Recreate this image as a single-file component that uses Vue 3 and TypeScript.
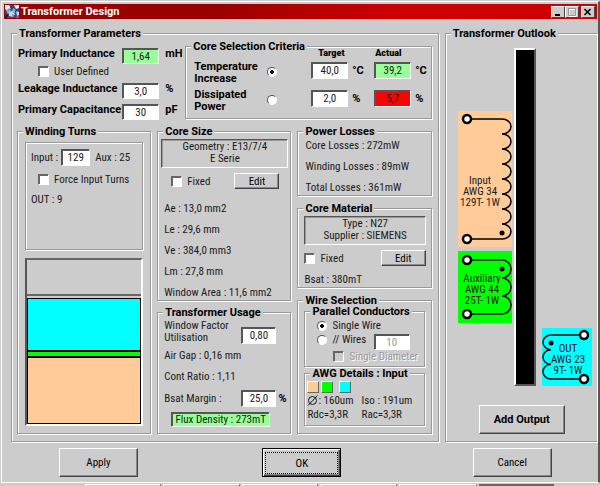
<script setup lang="ts">
import { ref } from 'vue'

interface Winding {
  id: string
  name: string
  gauge: string
  turns: string
  fill: string
  width: number
  height: number
  loops: number
  top: number
  flip: boolean
  dotY: number
  textX: number
  textY: number
}

const primaries: Winding[] = [
  { id: 'in', name: 'Input', gauge: 'AWG 34', turns: '129T- 1W', fill: '#ffcc99', width: 54, height: 136, loops: 8, top: 8, flip: false, dotY: 122, textX: 22, textY: 73 },
  { id: 'aux', name: 'Auxiliary', gauge: 'AWG 44', turns: '25T- 1W', fill: '#00ff00', width: 54, height: 72, loops: 3, top: 9, flip: false, dotY: 18, textX: 24, textY: 31 },
]
const secondaries: Winding[] = [
  { id: 'out', name: 'OUT', gauge: 'AWG 23', turns: '9T- 1W', fill: '#00ffff', width: 50, height: 58, loops: 3, top: 7, flip: true, dotY: 15, textX: 26, textY: 24 },
]

const cuspX = (w: Winding) => (w.flip ? 9 : w.width - 10)
const pinX = (w: Winding) => (w.flip ? w.width - 8 : 9)

function coil(w: Winding): string {
  const pitch = (w.height - 2 * w.top) / w.loops
  const arc = w.flip ? `a8 ${pitch / 2} 0 0 0 0 ${pitch}` : `a9 ${pitch / 2} 0 0 1 0 ${pitch}`
  return `M${pinX(w)} ${w.top}H${cuspX(w)}${arc.repeat(w.loops)}H${pinX(w)}`
}

const layers = [
  { kind: 'out', share: 53 },
  { kind: 'aux', share: 5 },
  { kind: 'in', share: 68 },
]
const coreSize = ['Ae : 13,0 mm2', 'Le : 29,6 mm', 'Ve : 384,0 mm3', 'Lm : 27,8 mm', 'Window Area : 11,6 mm2']
const losses = ['Core Losses : 272mW', 'Winding Losses : 89mW', 'Total Losses : 361mW']
const tasks = [
  { id: 1, span: 76, active: false },
  { id: 2, span: 76, active: false },
  { id: 3, span: 76, active: false },
  { id: 4, span: 77, active: false },
  { id: 5, span: 77, active: false },
  { id: 6, span: 77, active: true },
]

const inductance = ref('1,64')
const leakage = ref('3,0')
const capacitance = ref('30')
const tempTarget = ref('40,0')
const tempActual = ref('39,2')
const powerTarget = ref('2,0')
const powerActual = ref('5,7')
const inputTurns = ref('129')
const windowFactor = ref('0,80')
const bsatMargin = ref('25,0')
const wires = ref('10')
const criterion = ref('temperature')
const conductor = ref('single')
const userDefined = ref(false)
const forceTurns = ref(false)
const sizeFixed = ref(false)
const materialFixed = ref(false)
</script>

<template>
  <div class="screen">
    <main class="window">
      <header class="titlebar">
        <svg class="app-icon" viewBox="0 0 14 13" aria-hidden="true">
          <rect width="14" height="13" fill="#3a4a78" />
          <path d="M0 0h4l2 3-3 3-3-2zM9 0h5v3l-3 1z" fill="#e8eef8" />
          <path d="M1 5l3-2 2 3-3 3zM8 3l3 2-1 3-3-1z" fill="#79b8e0" />
          <path d="M4 7l3-1 3 3-2 3-4-1zM11 6l3 1v3l-2 1z" fill="#c8d4ea" />
          <path d="M5 1l2 1-1 2zM11 4l1 2-2 1zM1 9l2 1-1 3H0z" fill="#14182c" />
          <path d="M7 9l2 1-1 2zM3 4l1 1-1 1zM12 11l2 0v2h-3z" fill="#b04a8a" />
        </svg>
        <h1>Transformer Design</h1>
        <div class="controls">
          <button type="button" class="ctl" aria-label="Minimize"><svg viewBox="0 0 11 10"><path d="M3 8h5" stroke="#000" stroke-width="2" /></svg></button>
          <button type="button" class="ctl" aria-label="Maximize" disabled><svg viewBox="0 0 11 10"><path d="M3 2.5h7v7H3z" fill="none" stroke="#fff" /><path d="M2.500 1v7.500h7V2M2 1.500h8" fill="none" stroke="#999" /></svg></button>
          <button type="button" class="ctl close" aria-label="Close"><svg viewBox="0 0 11 10"><path d="M2.500 2l6 6M8.500 2l-6 6" stroke="#000" stroke-width="1.500" /></svg></button>
        </div>
      </header>

      <div class="body">
        <fieldset class="group params">
          <legend>Transformer Parameters</legend>
          <div class="top">
            <div class="primary">
              <div class="field">
                <label for="ind">Primary Inductance</label>
                <input id="ind" v-model="inductance" class="box good" type="text"><span>mH</span>
              </div>
              <label class="tick user"><input v-model="userDefined" type="checkbox">User Defined</label>
              <div class="field spaced">
                <label for="leak">Leakage Inductance</label>
                <input id="leak" v-model="leakage" class="box" type="text"><span>%</span>
              </div>
              <div class="field">
                <label for="cap">Primary Capacitance</label>
                <input id="cap" v-model="capacitance" class="box" type="text"><span>pF</span>
              </div>
            </div>

            <fieldset class="group criteria">
              <legend>Core Selection Criteria</legend>
              <span class="head target" id="h-target">Target</span>
              <span class="head" id="h-actual">Actual</span>
              <label for="crit-t" class="crit">Temperature<br>Increase</label>
              <input id="crit-t" v-model="criterion" type="radio" name="criterion" value="temperature">
              <div class="value"><input v-model="tempTarget" class="box" type="text" aria-labelledby="h-target"><span>°C</span></div>
              <div class="value"><input v-model="tempActual" class="box good" type="text" aria-labelledby="h-actual"><span>°C</span></div>
              <label for="crit-p" class="crit">Dissipated<br>Power</label>
              <input id="crit-p" v-model="criterion" type="radio" name="criterion" value="power">
              <div class="value"><input v-model="powerTarget" class="box" type="text" aria-labelledby="h-target"><span>%</span></div>
              <div class="value"><input v-model="powerActual" class="box bad" type="text" aria-labelledby="h-actual"><span>%</span></div>
            </fieldset>
          </div>

          <div class="columns">
            <fieldset class="group winding">
              <legend>Winding Turns</legend>
              <div class="turns">
                <div class="turn-row">
                  <label for="turns">Input :</label>
                  <input id="turns" v-model="inputTurns" class="box" type="text">
                  <span>Aux : 25</span>
                </div>
                <label class="tick force"><input v-model="forceTurns" type="checkbox">Force Input Turns</label>
                <p>OUT : 9</p>
              </div>
              <div class="bin">
                <div class="free"></div>
                <div v-for="l in layers" :key="l.kind" class="layer" :class="l.kind" :style="{ flexGrow: l.share }"></div>
              </div>
            </fieldset>

            <div class="stack">
              <fieldset class="group size">
                <legend>Core Size</legend>
                <div class="panel">Geometry : E13/7/4<br>E Serie</div>
                <div class="edit-row">
                  <label class="tick"><input v-model="sizeFixed" type="checkbox">Fixed</label>
                  <button type="button" class="btn small">Edit</button>
                </div>
                <div class="lines">
                  <p v-for="s in coreSize" :key="s">{{ s }}</p>
                </div>
              </fieldset>
              <fieldset class="group usage">
                <legend>Transformer Usage</legend>
                <div class="use-row">
                  <label for="wf">Window Factor<br>Utilisation</label>
                  <input id="wf" v-model="windowFactor" class="box" type="text"><span></span>
                </div>
                <div class="lines">
                  <p>Air Gap : 0,16 mm</p>
                  <p>Cont Ratio : 1,11</p>
                </div>
                <div class="use-row margin">
                  <label for="bm">Bsat Margin :</label>
                  <input id="bm" v-model="bsatMargin" class="box" type="text"><span>%</span>
                </div>
                <output class="flux">Flux Density : 273mT</output>
              </fieldset>
            </div>

            <div class="stack third">
              <fieldset class="group losses">
                <legend>Power Losses</legend>
                <div class="lines">
                  <p v-for="s in losses" :key="s">{{ s }}</p>
                </div>
              </fieldset>
              <fieldset class="group material">
                <legend>Core Material</legend>
                <div class="panel">Type : N27<br>Supplier : SIEMENS</div>
                <div class="edit-row">
                  <label class="tick"><input v-model="materialFixed" type="checkbox">Fixed</label>
                  <button type="button" class="btn small">Edit</button>
                </div>
                <p>Bsat : 380mT</p>
              </fieldset>
              <fieldset class="group wire">
                <legend>Wire Selection</legend>
                <fieldset class="group parallel">
                  <legend>Parallel Conductors</legend>
                  <label class="tick"><input v-model="conductor" type="radio" name="conductor" value="single">Single Wire</label>
                  <div class="wires">
                    <label class="tick"><input v-model="conductor" type="radio" name="conductor" value="parallel">// Wires</label>
                    <input v-model="wires" class="box" type="text" aria-label="Wires" disabled>
                  </div>
                  <label class="tick off"><input type="checkbox" disabled>Single Diameter</label>
                </fieldset>
                <fieldset class="group awg">
                  <legend>AWG Details : Input</legend>
                  <div class="swatches">
                    <button type="button" class="swatch in" aria-label="Input"></button>
                    <button type="button" class="swatch aux" aria-label="Auxiliary"></button>
                    <button type="button" class="swatch out" aria-label="OUT"></button>
                  </div>
                  <div class="details">
                    <span><svg class="dia" viewBox="0 0 11 11" aria-hidden="true"><circle cx="5.500" cy="5.500" r="4" /><path d="M1 10.500l9.500-10" /></svg>: 160um</span><span>Iso : 191um</span>
                    <span>Rdc=3,3R</span><span>Rac=3,3R</span>
                  </div>
                </fieldset>
              </fieldset>
            </div>
          </div>
        </fieldset>

        <fieldset class="group outlook">
          <legend>Transformer Outlook</legend>
          <div class="drawing">
            <div class="side left">
              <svg v-for="w in primaries" :key="w.id" class="coil" :width="w.width" :height="w.height">
                <rect :width="w.width" :height="w.height" :fill="w.fill" />
                <path :d="coil(w)" class="strand" />
                <circle :cx="pinX(w)" :cy="w.top" r="4" class="pin" />
                <circle :cx="pinX(w)" :cy="w.height - w.top" r="4" class="pin" />
                <circle :cx="cuspX(w)" :cy="w.dotY" r="2.500" />
                <text :x="w.textX" :y="w.textY">{{ w.name }}</text>
                <text :x="w.textX" :y="w.textY + 11">{{ w.gauge }}</text>
                <text :x="w.textX" :y="w.textY + 22">{{ w.turns }}</text>
              </svg>
            </div>
            <div class="core"></div>
            <div class="side right">
              <svg v-for="w in secondaries" :key="w.id" class="coil" :width="w.width" :height="w.height">
                <rect :width="w.width" :height="w.height" :fill="w.fill" />
                <path :d="coil(w)" class="strand" />
                <circle :cx="pinX(w)" :cy="w.top" r="4" class="pin" />
                <circle :cx="pinX(w)" :cy="w.height - w.top" r="4" class="pin" />
                <circle :cx="cuspX(w)" :cy="w.dotY" r="2.500" />
                <text :x="w.textX" :y="w.textY">{{ w.name }}</text>
                <text :x="w.textX" :y="w.textY + 11">{{ w.gauge }}</text>
                <text :x="w.textX" :y="w.textY + 22">{{ w.turns }}</text>
              </svg>
            </div>
          </div>
          <button type="button" class="btn add">Add Output</button>
        </fieldset>
      </div>

      <footer class="actions">
        <button type="button" class="btn">Apply</button>
        <button type="button" class="btn default"><span>OK</span></button>
        <button type="button" class="btn">Cancel</button>
      </footer>
    </main>

    <div class="taskbar">
      <div v-for="t in tasks" :key="t.id" class="task" :class="{ active: t.active }" :style="{ flexGrow: t.span }"></div>
    </div>
  </div>
</template>

<style>
body {
  background: #cccccc;
}
</style>

<style scoped>
.screen {
  background: #cccccc;
  color: #1a1a1a;
  font: 11px/11px "Roboto Condensed", Roboto, "Liberation Sans", sans-serif;
  overflow: hidden;
}
.screen *,
.screen *::before {
  box-sizing: border-box;
}
button,
input {
  font: inherit;
  color: inherit;
  margin: 0;
}
p {
  margin: 0;
  white-space: nowrap;
}
.window {
  margin: 1px 0 0 1px;
  border-top: 1px solid #fff;
  border-left: 1px solid #fff;
  border-right: 2px solid #555;
  border-bottom: 1px solid #fffff0;
  padding: 2px 1px 5px 2px;
}
.titlebar {
  display: flex;
  align-items: center;
  height: 15px;
  padding: 0 2px 0 1px;
  background: linear-gradient(90deg, #990000, #990000 35%, #cc0000 65%, #cc0000);
}
.app-icon {
  width: 14px;
  height: 13px;
  flex: none;
}
h1 {
  margin: 0 0 0 2px;
  color: #fff;
  font: bold 11px/15px Roboto, "Liberation Sans", sans-serif;
}
.controls {
  display: flex;
  margin-left: auto;
}
.ctl {
  width: 14px;
  height: 12px;
  padding: 0;
  border: 1px solid;
  border-color: #fff #444 #444 #fff;
  background: #cccccc;
}
.ctl svg {
  display: block;
  width: 11px;
  height: 10px;
}
.close {
  margin-left: 2px;
}
.body {
  display: grid;
  grid-template-columns: minmax(0, 427fr) minmax(0, 152fr);
  gap: 6px;
  padding: 12px 0 0 7px;
}

/* Etched group box: gray line with a white line under it */
.group {
  --indent: 5px;
  min-width: 0;
  margin: 0;
  padding: 0 0 0 var(--indent);
  border: 1px solid #999;
  box-shadow: 1px 1px #fff, inset 1px 1px #fff;
}
/* The title keeps its distance from the frame whatever the box's indent */
.group > legend {
  margin-left: calc(5px - var(--indent));
  padding: 0 2px;
  background: #cccccc;
  color: #000;
  font: bold 11px/5px Roboto, "Liberation Sans", sans-serif;
  white-space: nowrap;
}
.params {
  padding: 8px 6px 6px var(--indent);
}
.top {
  display: grid;
  grid-template-columns: 168fr 246fr;
  align-items: start;
  margin-bottom: 9px;
}
.primary {
  padding: 4px 0 0 1px;
}
.field {
  display: grid;
  grid-template-columns: 104fr 37fr 26fr;
  align-items: start;
}
.field label,
.field span,
.crit,
.value span,
.use-row span {
  color: #000;
  font: bold 11px/12px Roboto, "Liberation Sans", sans-serif;
  white-space: nowrap;
}
.field span {
  padding-left: 6px;
}
.spaced {
  margin-bottom: 5px;
}
.box {
  width: 100%;
  height: 17px;
  padding: 0;
  border: 1px solid;
  border-color: #555 #fff #fff #555;
  border-radius: 0;
  background: #fff;
  box-shadow: inset 1px 1px #555;
  text-align: center;
  outline: none;
}
.field .box {
  height: 16px;
}
.good {
  background: #99ff99;
}
.bad {
  background: #ff0000;
}
.box:disabled {
  color: #999;
}
.tick {
  display: flex;
  align-items: center;
  gap: 5px;
  white-space: nowrap;
}
input[type="checkbox"] {
  appearance: none;
  flex: none;
  width: 11px;
  height: 11px;
  border: 1px solid;
  border-color: #666 #fff #fff #666;
  background: #fff;
  box-shadow: inset 1px 1px #666;
}
input[type="checkbox"]:disabled {
  background: #cccccc;
}
input[type="radio"] {
  appearance: none;
  flex: none;
  width: 10px;
  height: 10px;
  border: 1px solid;
  border-color: #555 #fff #fff #555;
  border-radius: 50%;
  background: #fff;
}
input[type="radio"]:checked {
  background: radial-gradient(circle, #000 0 2px, #fff 2px);
}
.user {
  height: 14px;
  margin: 0 0 5px 20px;
}
.criteria {
  --indent: 8px;
  display: grid;
  grid-template-columns: 73fr 44fr 63fr 52fr;
  align-items: start;
  row-gap: 4px;
  padding: 0 4px 5px var(--indent);
}
.head {
  padding-left: 1px;
  color: #000;
  font: 900 9px/8px Roboto, "Liberation Sans", sans-serif;
}
.target {
  grid-column: 3;
  padding-left: 7px;
}
.crit + input {
  margin-top: 6px;
}
.value {
  display: flex;
  align-items: center;
  gap: 4px;
  margin-top: 1px;
}
.value .box {
  width: 37px;
}
.columns {
  display: grid;
  grid-template-columns: repeat(3, minmax(0, 1fr));
  gap: 6px;
}
.winding {
  --indent: 7px;
  display: grid;
  grid-template-rows: 108fr 168fr;
  gap: 8px;
  padding: 8px 7px 7px var(--indent);
}
.turns {
  padding: 6px 5px;
  border: 1px solid #999;
  box-shadow: 1px 1px #fff, inset 1px 1px #fff;
}
.turn-row {
  display: flex;
  align-items: center;
  gap: 3px;
  white-space: nowrap;
}
.turn-row .box {
  width: 29px;
}
.turn-row span {
  padding-left: 2px;
}
.force {
  margin: 8px 0 9px 7px;
}
.bin {
  display: flex;
  flex-direction: column;
  border: 2px solid;
  border-color: #666 #fff #fff #555;
}
.free {
  flex: 36 0 0;
  margin-bottom: 2px;
  border-bottom: 2px solid #666;
}
.layer {
  flex-basis: 0;
  border: 1px solid #000;
}
.in {
  background: #ffcc99;
}
.aux {
  background: #00ff00;
}
.out {
  background: #00ffff;
}
.stack {
  display: flex;
  flex-direction: column;
  justify-content: space-between;
  gap: 9px;
}
.size {
  --indent: 3px;
  padding: 5px 2px 2px var(--indent);
}
.panel {
  padding: 1px 0 2px;
  line-height: 12px;
  border: 1px solid;
  border-color: #555 #fff #fff #555;
  box-shadow: inset 1px 1px #999;
  text-align: center;
  white-space: nowrap;
}
.edit-row {
  display: flex;
  align-items: center;
  justify-content: space-between;
  padding: 5px 9px 0 10px;
}
.btn {
  padding: 0;
  border: 1px solid;
  border-color: #fff #444 #444 #fff;
  border-radius: 0;
  background: #cccccc;
  box-shadow: inset -1px -1px #888;
  color: #000;
}
.small {
  width: 45px;
  height: 16px;
}
.lines {
  display: flex;
  flex-direction: column;
  gap: 10px;
}
.size .lines {
  padding: 14px 3px 0;
}
.usage {
  --indent: 6px;
  padding: 5px 0 6px var(--indent);
}
.use-row {
  display: grid;
  grid-template-columns: 77fr 35fr 14fr;
  align-items: end;
  margin-bottom: 6px;
  line-height: 12px;
  white-space: nowrap;
}
.use-row span {
  padding-left: 2px;
}
.margin {
  align-items: center;
  margin: 8px 0 5px;
}
.flux {
  display: block;
  width: 99px;
  margin-left: 7px;
  padding: 1px 0;
  border: 1px solid;
  border-color: #555 #fff #fff #555;
  background: #99ff99;
  box-shadow: inset 1px 1px #555;
  text-align: center;
}
.losses {
  --indent: 7px;
  padding: 6px 7px 2px var(--indent);
}
.material {
  --indent: 6px;
  padding: 5px 5px 2px var(--indent);
}
.material .edit-row {
  padding: 5px 0 8px;
}
.wire {
  --indent: 6px;
  padding: 6px 6px 7px var(--indent);
}
.parallel {
  --indent: 12px;
  padding: 6px 14px 4px var(--indent);
}
.wires {
  display: flex;
  align-items: flex-start;
  justify-content: space-between;
  margin: 3px 0 1px;
}
.wires .box {
  width: 36px;
  height: 16px;
}
.off {
  margin-left: 16px;
  color: #999;
  text-shadow: 1px 1px #fff;
}
.awg {
  --indent: 2px;
  margin-top: 4px;
  padding: 5px 2px 5px var(--indent);
}
.swatches {
  display: flex;
  gap: 2px;
  margin-bottom: 2px;
}
.swatch {
  width: 12px;
  height: 12px;
  padding: 0;
  border: 1px solid;
  border-color: #fff #666 #666 #fff;
}
.swatch.out {
  margin-left: 4px;
}
.details {
  display: grid;
  grid-template-columns: 54fr 60fr;
  row-gap: 3px;
  white-space: nowrap;
}
.dia {
  width: 11px;
  height: 11px;
  vertical-align: top;
  fill: none;
  stroke: #1a1a1a;
}
.outlook {
  --indent: 12px;
  border-right: 0;
  padding: 12px 4px 7px var(--indent);
}
.drawing {
  display: flex;
  gap: 2px;
}
.side {
  display: flex;
  flex-direction: column;
  gap: 4px;
}
.left {
  padding-top: 63px;
}
.right {
  align-self: flex-end;
  margin-left: 4px;
}
.core {
  width: 22px;
  min-height: 338px;
  border: 2px solid;
  border-color: #fff #555 #555 #fff;
  background: #000;
}
.coil {
  display: block;
}
.strand {
  fill: none;
  stroke: #000;
  stroke-width: 1.5;
}
.pin {
  fill: #fff;
  stroke: #000;
  stroke-width: 2.5;
}
.coil text {
  fill: #1a1a1a;
  text-anchor: middle;
}
.add {
  display: block;
  width: 86px;
  height: 29px;
  margin: 19px auto 0 21px;
  font: bold 11px/12px Roboto, "Liberation Sans", sans-serif;
}
.actions {
  display: grid;
  grid-template-columns: 203fr 210fr 124fr;
  padding: 6px 0 0 55px;
}
.actions .btn {
  width: 79px;
  height: 29px;
}
.actions .default {
  padding: 2px;
  border: 1px solid #000;
  box-shadow: inset 1px 1px #fff, inset -1px -1px #444, inset -2px -2px #888;
}
.default span {
  display: block;
  height: 22px;
  border: 1px dotted #000;
  line-height: 21px;
}
.taskbar {
  display: flex;
  gap: 2px;
  height: 3px;
  margin-top: 1px;
  padding: 0 46px 0 85px;
}
.task {
  flex-basis: 0;
  border-top: 1px solid #fff;
  border-left: 1px solid #fff;
  border-right: 1px solid #555;
}
.active {
  border: 0;
  background: #666;
}
</style>
